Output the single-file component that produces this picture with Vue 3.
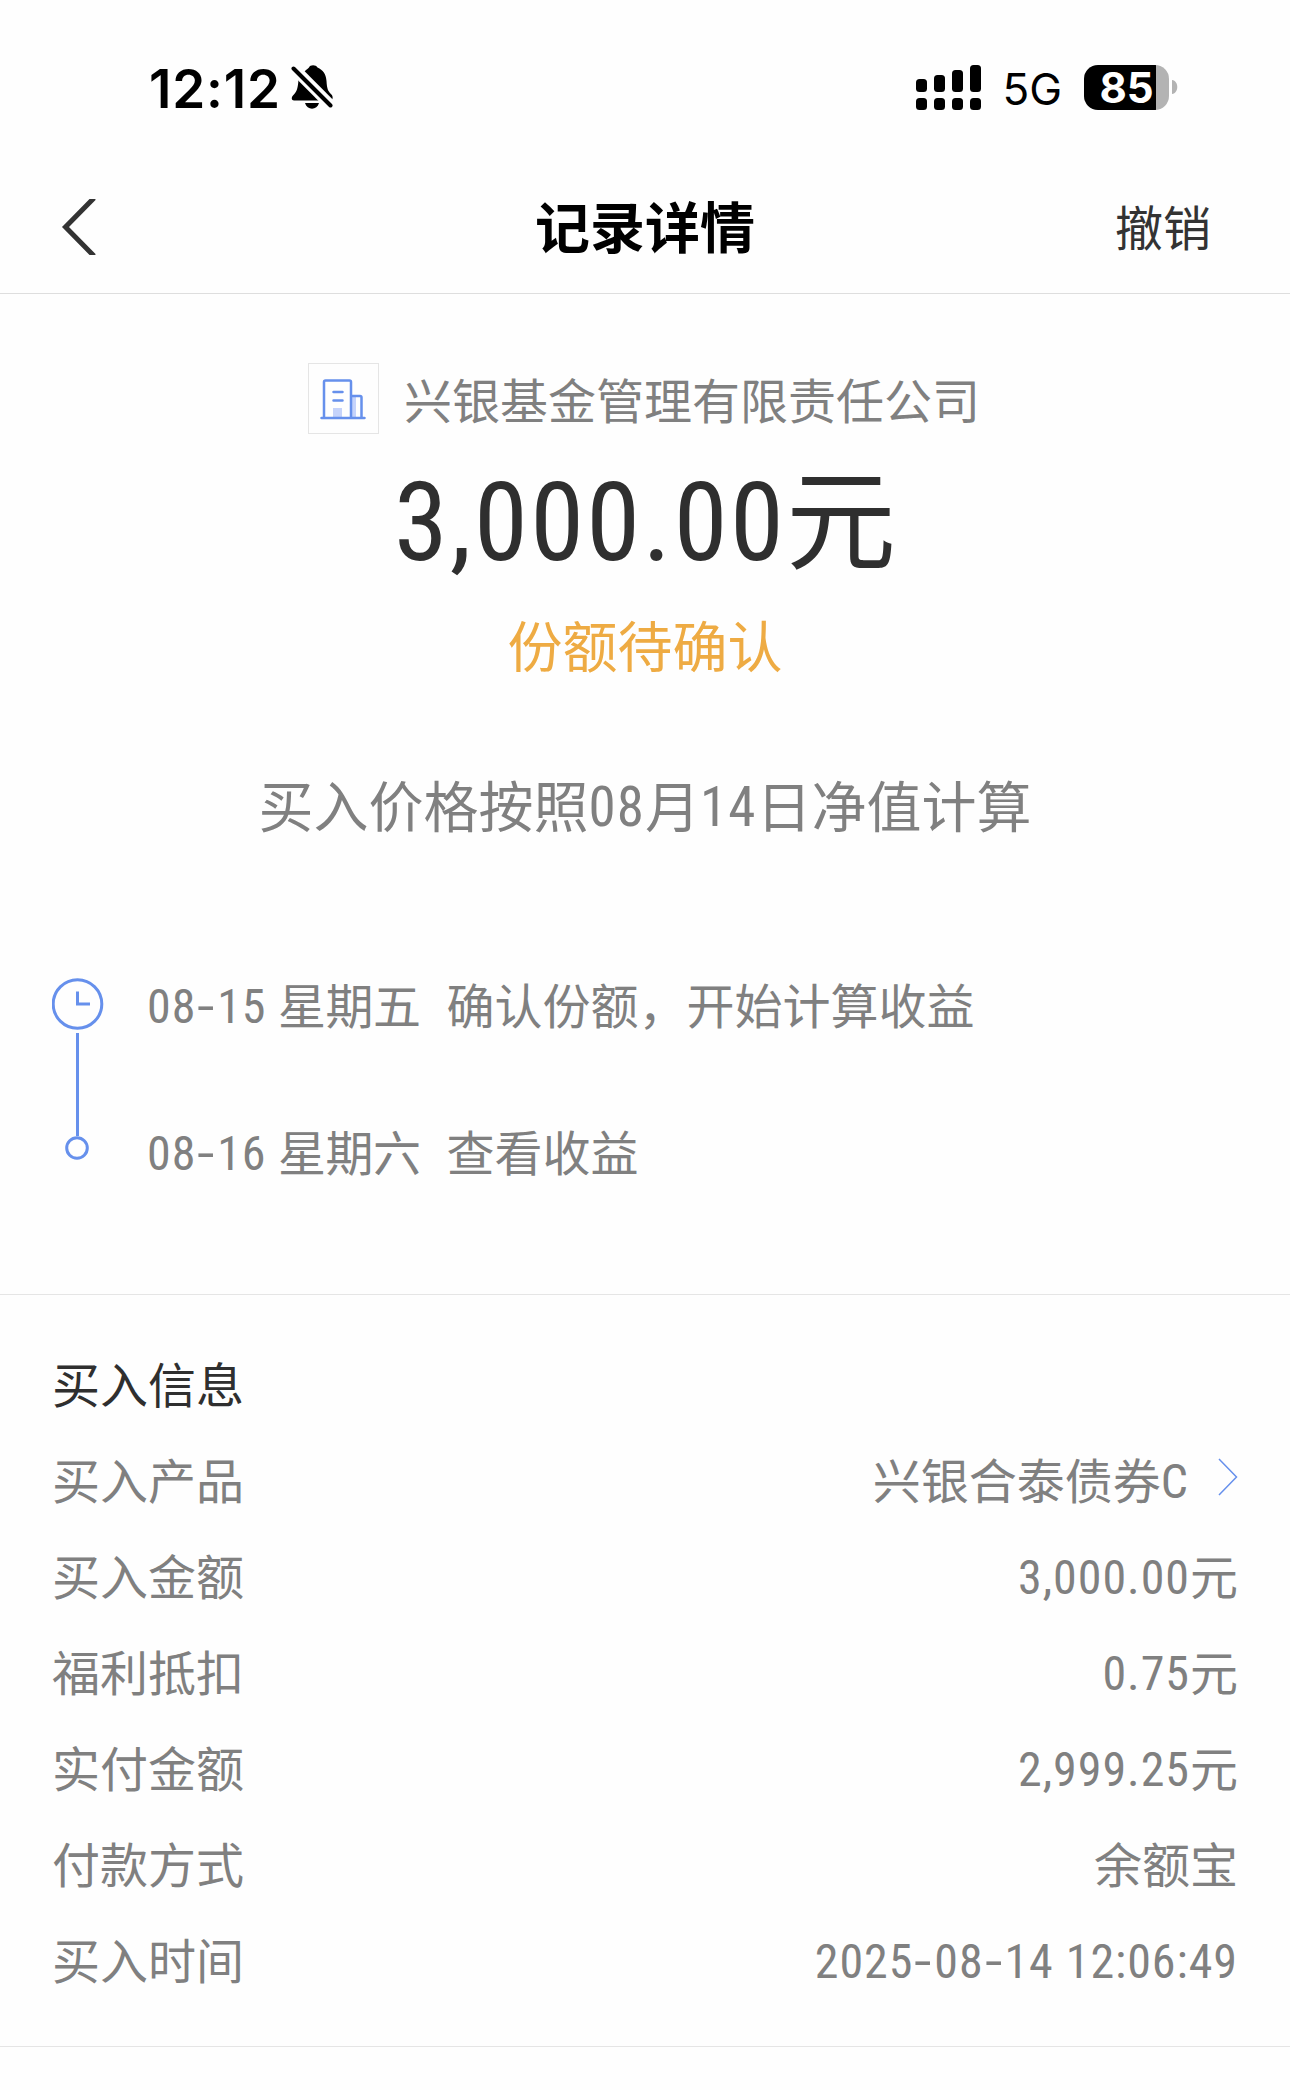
<script setup>
import { ref } from 'vue'

const signalBars = [
  { x: 0, y: 14, h: 13 },
  { x: 18, y: 10, h: 17 },
  { x: 36, y: 5, h: 22 },
  { x: 54, y: 0, h: 27 }
]

const steps = ref([
  { date: '08-15', day: '星期五', text: '确认份额，开始计算收益' },
  { date: '08-16', day: '星期六', text: '查看收益' }
])

const rows = ref([
  { label: '买入产品', value: '兴银合泰债券C', link: true },
  { label: '买入金额', value: '3,000.00元' },
  { label: '福利抵扣', value: '0.75元' },
  { label: '实付金额', value: '2,999.25元' },
  { label: '付款方式', value: '余额宝' },
  { label: '买入时间', value: '2025-08-14 12:06:49' }
])

// split a value into chinese, latin and dash runs, latin runs use the narrow number style
const runs = (text) =>
  (text.match(/-|[\x20-\x2c\x2e-\x7e]+|[^\x20-\x7e]+/g) || []).map((t) => ({
    t,
    num: /^[\x20-\x7e]/.test(t),
    dash: t === '-'
  }))
</script>

<template>
  <div class="page">
    <div class="status-bar">
      <div class="status-left">
        <span class="time">12:12</span>
        <svg class="bell" width="44" height="48" viewBox="0 0 44 48">
          <path d="M14 8 C16 6 17 5.500 18 4.500 C19 1.500 25 1.500 26.500 4.500 C32 7 35 11 35.500 18 C36 26 37 28 40 31 C42 33 42 35 41 37 L40 37 L13 9 Z" />
          <path d="M7.500 16 L28 37.500 H3 C0.500 37.500 0 34.500 2 32.500 C6 28.500 7 25 7.500 16 Z" />
          <path d="M14 40 H28 C26 47.500 16 47.500 14 40 Z" />
          <path class="slash-gap" d="M2 4.500 L40.500 43" />
          <path class="slash" d="M2.500 5.500 L39.500 42.500" />
        </svg>
      </div>
      <div class="status-right">
        <svg class="signal" width="65" height="45" viewBox="0 0 65 45">
          <g v-for="bar in signalBars" :key="bar.x">
            <rect :x="bar.x" :y="bar.y" width="11" :height="bar.h" rx="3.500" />
            <rect :x="bar.x" y="33" width="11" height="12" rx="3.500" />
          </g>
        </svg>
        <span class="network">5G</span>
        <div class="battery">
          <div class="battery-body"><span class="battery-level">85</span></div>
          <svg width="6" height="14" viewBox="0 0 6 14"><path d="M0 0 C7 1 7 13 0 14 Z" fill="#b3b3b3" /></svg>
        </div>
      </div>
    </div>

    <header class="nav">
      <svg class="back" width="36" height="56" viewBox="0 0 36 56">
        <path d="M33 -1 L4.500 28 L33 57" />
      </svg>
      <h1 class="nav-title">记录详情</h1>
      <span class="nav-action">撤销</span>
    </header>

    <section class="summary">
      <div class="company">
        <div class="company-logo">
          <svg width="47" height="42" viewBox="0 0 47 42">
            <rect x="13" y="30" width="9" height="9" fill="#c5d3fb" />
            <rect x="32" y="17" width="4" height="22" fill="#c5d3fb" />
            <path d="M4 40 V4 Q4 2.500 5.500 2.500 H29.500 Q31 2.500 31 4 V40 M31 18 H40 Q41.500 18 41.500 19.500 V40 M1.500 40 H44.500 M13.500 14 H22.500 M13.500 22.500 H22.500" />
          </svg>
        </div>
        <span class="company-name">兴银基金管理有限责任公司</span>
      </div>
      <div class="amount"><span class="num amount-num">3,000.00</span>元</div>
      <div class="state">份额待确认</div>
      <div class="notice">买入价格按照<span class="num">08</span>月<span class="num">14</span>日净值计算</div>
    </section>

    <section class="timeline">
      <svg class="track" width="52" height="184" viewBox="0 0 52 184">
        <circle cx="25.500" cy="26" r="24.300" />
        <path d="M25.500 13.500 V26 H38" />
        <path d="M25.500 55 V158" />
        <circle cx="25" cy="170" r="10.300" />
      </svg>
      <div class="steps">
        <div v-for="step in steps" :key="step.date" class="step">
          <span class="step-date"><span v-for="(run, i) in runs(step.date)" :key="i" class="num" :class="{ dash: run.dash }">{{ run.t }}</span></span>
          <span class="step-day">{{ step.day }}</span>
          <span>{{ step.text }}</span>
        </div>
      </div>
    </section>

    <section class="info">
      <h2 class="info-title">买入信息</h2>
      <div v-for="row in rows" :key="row.label" class="row">
        <span>{{ row.label }}</span>
        <div class="value">
          <span><span v-for="(run, i) in runs(row.value)" :key="i" :class="{ num: run.num, dash: run.dash }">{{ run.t }}</span></span>
          <svg v-if="row.link" class="arrow" width="20" height="38" viewBox="0 0 20 38">
            <path d="M1 1 L18.500 19 L1 37" />
          </svg>
        </div>
      </div>
    </section>
  </div>
</template>

<style>
body { margin: 0; background: #fefefe; }
</style>

<style scoped>
.page {
  width: 1290px;
  height: 2090px;
  overflow: hidden;
  background: #fefefe;
  color: #808080;
  font-family: "Noto Sans CJK SC", sans-serif;
  font-size: 48px;
}
.num {
  font-family: Roboto, sans-serif;
  font-stretch: 75%;
  line-height: 1;
  letter-spacing: 0.02em;
  vertical-align: 0.025em;
  white-space: pre;
}
.dash { display: inline-block; padding: 0 4px; transform: scaleX(1.5); }

.status-bar {
  display: flex;
  justify-content: space-between;
  box-sizing: border-box;
  height: 160px;
  padding: 56px 112px 0 149px;
  color: #000;
  font-family: Inter, sans-serif;
}
.status-left, .status-right { display: flex; align-items: center; height: 62px; }
.time { padding-top: 3px; font-size: 53px; font-weight: 600; letter-spacing: 0.8px; }
.bell { margin-left: 10px; }
.slash { fill: none; stroke: #000; stroke-width: 4; stroke-linecap: round; }
.slash-gap { fill: none; stroke: #fefefe; stroke-width: 11; }
.network { margin-left: 21px; padding-top: 4px; font-size: 44px; }
.battery { display: flex; align-items: center; gap: 3px; margin-left: 22px; }
.battery-body {
  display: flex;
  align-items: center;
  justify-content: center;
  width: 85px;
  height: 45px;
  border-radius: 14px;
  background: linear-gradient(90deg, #000 72px, #b3b3b3 72px);
}
.battery-level { color: #fff; font-size: 42px; font-weight: 700; line-height: 45px; }

.nav {
  display: grid;
  grid-template-columns: 1fr auto 1fr;
  align-items: center;
  box-sizing: border-box;
  height: 134px;
  padding: 0 61px;
  border-bottom: 1px solid #dedede;
}
.back path { fill: none; stroke: #333; stroke-width: 5; }
.nav-title { margin: 0; padding-bottom: 6px; color: #000; font-size: 55px; font-weight: 700; }
.nav-action { justify-self: end; padding: 0 18px 4px 0; color: #333; }

.summary { display: flex; flex-direction: column; align-items: center; }
.company { display: flex; align-items: center; gap: 25px; height: 71px; margin: 69px 2px 0 0; }
.company-logo {
  display: flex;
  align-items: center;
  justify-content: center;
  box-sizing: border-box;
  width: 71px;
  height: 71px;
  border: 1px solid #e5e5e5;
}
.company-logo path { fill: none; stroke: #6690ec; stroke-width: 2.5; stroke-linecap: round; }
.company-name { padding-bottom: 2px; }
.amount { height: 150px; margin-top: 4px; color: #2f2f2f; font-size: 110px; line-height: 150px; }
.amount-num { font-size: 109px; letter-spacing: 0.022em; vertical-align: 0.01em; }
.state { height: 80px; margin-top: 15px; color: #eeab43; font-size: 55px; line-height: 80px; }
.notice { height: 80px; margin-top: 80px; font-size: 55px; line-height: 80px; }

.timeline {
  display: flex;
  box-sizing: border-box;
  height: 452px;
  padding: 87px 52px 0 52px;
  border-bottom: 1px solid #e5e5e5;
}
.track { margin-top: 48px; fill: none; stroke: #6690ec; stroke-width: 3; }
.steps { margin-left: 43px; }
.step { display: flex; align-items: baseline; height: 147px; line-height: 147px; }
.step-date { width: 131px; }
.step-day { margin-right: 26px; letter-spacing: -0.5px; }

.info { padding: 39px 52px 40px; border-bottom: 1px solid #e5e5e5; }
.info-title { height: 96px; margin: 0; color: #2f2f2f; font-size: 48px; font-weight: 400; line-height: 96px; }
.row { display: flex; justify-content: space-between; height: 96px; line-height: 96px; }
.value { display: flex; align-items: center; }
.arrow { margin: -2px 0 0 29px; }
.arrow path { fill: none; stroke: #6690ec; stroke-width: 1.5; }
</style>
